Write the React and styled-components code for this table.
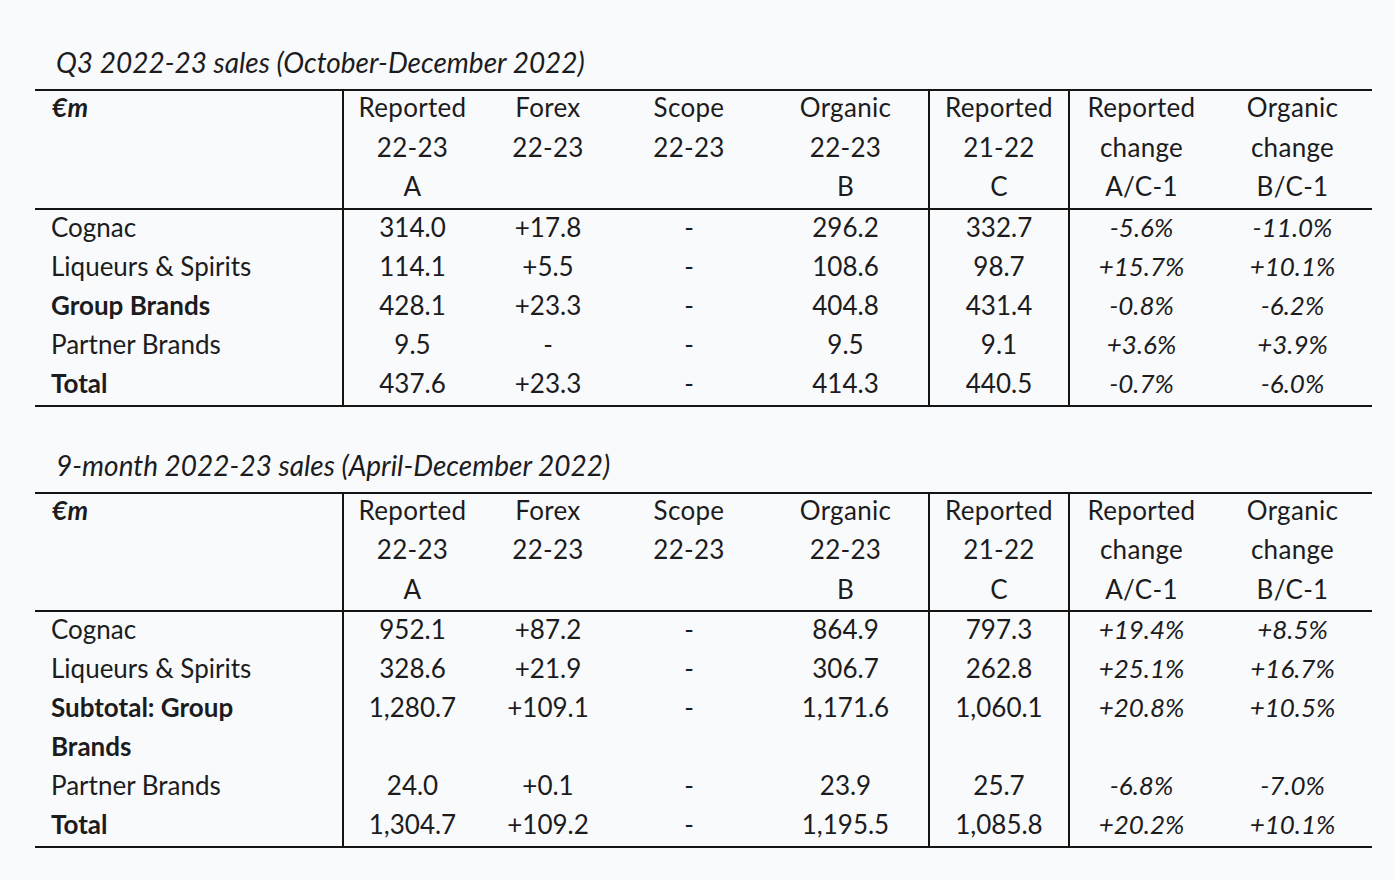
import styled, { createGlobalStyle } from "styled-components";

const GlobalStyle = createGlobalStyle`
  html, body {
    margin: 0;
    padding: 0;
    background: #f9fafc;
  }
  body {
    font-family: Lato, "Open Sans", sans-serif;
    color: #1c1c1e;
  }
`;

const Page = styled.div`
  width: 1394px;
  height: 880px;
  box-sizing: border-box;
  padding: 44px 0 0 35px;
  display: flex;
  flex-direction: column;
  gap: 40px;
`;

const Section = styled.section`
  display: flex;
  flex-direction: column;
`;

const Title = styled.h2`
  margin: 0 0 9px 0;
  padding-left: 21px;
  font-size: 28px;
  line-height: 36px;
  font-style: italic;
  font-weight: 400;
`;

const Table = styled.table`
  width: 1337px;
  table-layout: fixed;
  border-collapse: collapse;
  border-top: 2px solid #141414;
  border-bottom: 2px solid #141414;
  font-size: 26px;
`;

const Head = styled.thead`
  border-bottom: 2px solid #141414;
`;

const Th = styled.th`
  padding: 0 0 1px;
  font-weight: 400;
  line-height: 39.5px;
  text-align: center;
  vertical-align: top;
  border-right: ${(p) => (p.$divider ? "2px solid #141414" : "none")};
`;

const HeadLines = styled.div`
  margin-top: -3px;
  letter-spacing: 0.3px;
`;

const UnitTh = styled(Th)`
  text-align: left;
  padding-left: 17px;
  font-style: italic;
  font-weight: 700;
`;

const Td = styled.td`
  padding: 0;
  line-height: 39px;
  text-align: center;
  vertical-align: top;
  font-style: ${(p) => (p.$italic ? "italic" : "normal")};
  border-right: ${(p) => (p.$divider ? "2px solid #141414" : "none")};
`;

const LabelTd = styled(Td)`
  text-align: left;
  padding: 0 40px 0 16px;
  font-weight: ${(p) => (p.$bold ? 700 : 400)};
`;

const CellText = styled.div`
  margin: -2px 0 2px;
`;

const widths = [308, 138, 134, 148, 166, 140, 144, 159];
const dividers = [true, false, false, false, true, true, false, false];

const headers = [
  ["Reported", "22-23", "A"],
  ["Forex", "22-23"],
  ["Scope", "22-23"],
  ["Organic", "22-23", "B"],
  ["Reported", "21-22", "C"],
  ["Reported", "change", "A/C-1"],
  ["Organic", "change", "B/C-1"],
];

const q3Rows = [
  { label: "Cognac", values: ["314.0", "+17.8", "-", "296.2", "332.7", "-5.6%", "-11.0%"] },
  { label: "Liqueurs & Spirits", values: ["114.1", "+5.5", "-", "108.6", "98.7", "+15.7%", "+10.1%"] },
  { label: "Group Brands", bold: true, values: ["428.1", "+23.3", "-", "404.8", "431.4", "-0.8%", "-6.2%"] },
  { label: "Partner Brands", values: ["9.5", "-", "-", "9.5", "9.1", "+3.6%", "+3.9%"] },
  { label: "Total", bold: true, values: ["437.6", "+23.3", "-", "414.3", "440.5", "-0.7%", "-6.0%"] },
];

const nineMonthRows = [
  { label: "Cognac", values: ["952.1", "+87.2", "-", "864.9", "797.3", "+19.4%", "+8.5%"] },
  { label: "Liqueurs & Spirits", values: ["328.6", "+21.9", "-", "306.7", "262.8", "+25.1%", "+16.7%"] },
  { label: "Subtotal: Group Brands", bold: true, values: ["1,280.7", "+109.1", "-", "1,171.6", "1,060.1", "+20.8%", "+10.5%"] },
  { label: "Partner Brands", values: ["24.0", "+0.1", "-", "23.9", "25.7", "-6.8%", "-7.0%"] },
  { label: "Total", bold: true, values: ["1,304.7", "+109.2", "-", "1,195.5", "1,085.8", "+20.2%", "+10.1%"] },
];

function SalesTable({ title, rows }) {
  return (
    <Section>
      <Title>{title}</Title>
      <Table>
        <colgroup>
          {widths.map((w, i) => (
            <col key={i} style={{ width: w }} />
          ))}
        </colgroup>
        <Head>
          <tr>
            <UnitTh $divider>
              <HeadLines>€m</HeadLines>
            </UnitTh>
            {headers.map((lines, i) => (
              <Th key={i} $divider={dividers[i + 1]}>
                <HeadLines>
                  {lines.map((l, j) => (
                    <div key={j}>{l}</div>
                  ))}
                </HeadLines>
              </Th>
            ))}
          </tr>
        </Head>
        <tbody>
          {rows.map((row) => (
            <tr key={row.label}>
              <LabelTd $divider $bold={row.bold}>
                <CellText>{row.label}</CellText>
              </LabelTd>
              {row.values.map((v, i) => (
                <Td key={i} $divider={dividers[i + 1]} $italic={i >= 5}>
                  <CellText>{v}</CellText>
                </Td>
              ))}
            </tr>
          ))}
        </tbody>
      </Table>
    </Section>
  );
}

export default function App() {
  return (
    <>
      <GlobalStyle />
      <Page>
        <SalesTable title="Q3 2022-23 sales (October-December 2022)" rows={q3Rows} />
        <SalesTable title="9-month 2022-23 sales (April-December 2022)" rows={nineMonthRows} />
      </Page>
    </>
  );
}
